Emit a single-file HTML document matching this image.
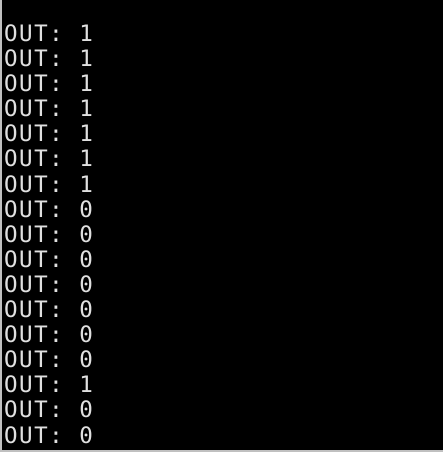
<!DOCTYPE html>
<html><head><style>
html,body{margin:0;padding:0;background:#000;width:443px;height:452px;overflow:hidden}
.l{position:absolute;left:0;top:0;width:2px;height:452px;background:#c0c0c0}
.b{position:absolute;left:0;top:450px;width:443px;height:2px;background:#c0c0c0}
pre{position:absolute;left:4px;top:22px;margin:0;font-family:"DejaVu Sans Mono","Liberation Mono",monospace;font-size:22.5px;letter-spacing:1.5px;line-height:25.1px;color:#e0e0e0}
</style></head><body>
<div class="l"></div><div class="b"></div>
<pre>OUT: 1
OUT: 1
OUT: 1
OUT: 1
OUT: 1
OUT: 1
OUT: 1
OUT: 0
OUT: 0
OUT: 0
OUT: 0
OUT: 0
OUT: 0
OUT: 0
OUT: 1
OUT: 0
OUT: 0</pre>
</body></html>
